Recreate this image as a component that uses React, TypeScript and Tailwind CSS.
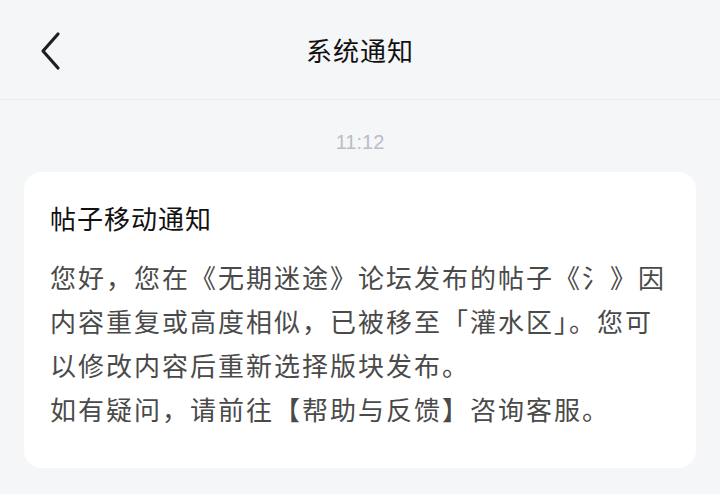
const cjk = { fontFamily: '"Noto Sans CJK SC", "Noto Sans", sans-serif' };

function BackIcon() {
  return (
    <svg width="24" height="40" viewBox="0 0 24 40" fill="none">
      <path d="M20 3 L5 20 L20 37" stroke="#1f1f1f" strokeWidth="3.2" strokeLinecap="round" strokeLinejoin="round" />
    </svg>
  );
}

export default function App() {
  return (
    <div className="h-[494px] w-[720px] overflow-hidden bg-[#f5f6f8]" style={cjk}>
      <header className="relative flex h-[100px] items-center justify-center border-b border-[#e9eaec]">
        <button className="absolute left-[38px] top-[31px]">
          <BackIcon />
        </button>
        <h1 className="text-[26px] font-normal tracking-[1px] text-[#111]">系统通知</h1>
      </header>

      <div className="pt-[28px] text-center text-[20px] leading-[28px] text-[#b9bdc4]" style={{ fontFamily: '"Liberation Sans", sans-serif' }}>
        11:12
      </div>

      <div className="mx-[24px] mt-[16px] rounded-[18px] bg-white px-[26px] pb-[37px] pt-[24px]">
        <h2 className="text-[26px] font-normal leading-[44px] tracking-[1px] text-[#111]">帖子移动通知</h2>
        <div className="mt-[15px] text-[26px] leading-[44px] tracking-[2px] text-[#4a4a4a]">
          <p>您好，您在《无期迷途》论坛发布的帖子《氵》因内容重复或高度相似，已被移至「灌水区」。您可以修改内容后重新选择版块发布。</p>
          <p>如有疑问，请前往【帮助与反馈】咨询客服。</p>
        </div>
      </div>
    </div>
  );
}
